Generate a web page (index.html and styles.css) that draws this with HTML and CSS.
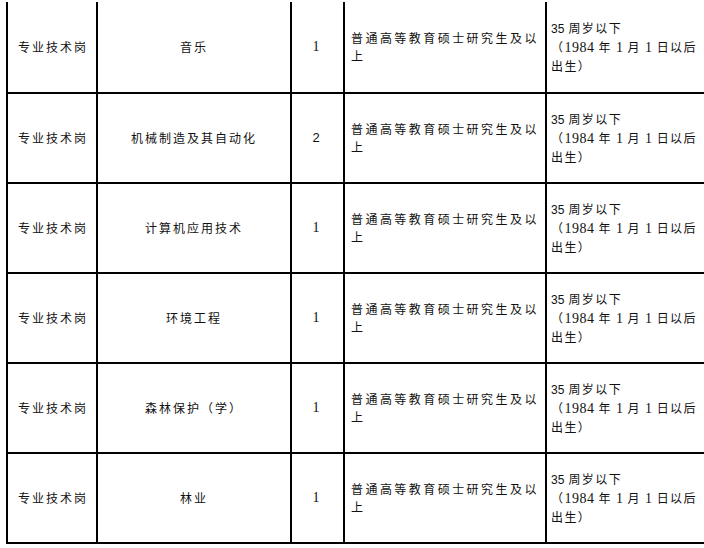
FILE: index.html
```html
<!DOCTYPE html>
<html lang="zh">
<head>
<meta charset="utf-8">
<link rel="stylesheet" href="styles.css">
</head>
<body>
<div class="sheet">
  <div class="cell c1">专业技术岗</div>
  <div class="cell c2">音乐</div>
  <div class="cell c3">1</div>
  <div class="cell c4"><span>普通高等教育硕士研究生及以上</span></div>
  <div class="cell c5"><span class="age"><span class="lat">35</span> 周岁以下<br>（<span class="num">1984</span> 年 <span class="num">1</span> 月 <span class="num">1</span> 日以后<br>出生）</span></div>

  <div class="cell c1">专业技术岗</div>
  <div class="cell c2">机械制造及其自动化</div>
  <div class="cell c3 lat">2</div>
  <div class="cell c4"><span>普通高等教育硕士研究生及以上</span></div>
  <div class="cell c5"><span class="age"><span class="lat">35</span> 周岁以下<br>（<span class="num">1984</span> 年 <span class="num">1</span> 月 <span class="num">1</span> 日以后<br>出生）</span></div>

  <div class="cell c1">专业技术岗</div>
  <div class="cell c2">计算机应用技术</div>
  <div class="cell c3">1</div>
  <div class="cell c4"><span>普通高等教育硕士研究生及以上</span></div>
  <div class="cell c5"><span class="age"><span class="lat">35</span> 周岁以下<br>（<span class="num">1984</span> 年 <span class="num">1</span> 月 <span class="num">1</span> 日以后<br>出生）</span></div>

  <div class="cell c1">专业技术岗</div>
  <div class="cell c2">环境工程</div>
  <div class="cell c3">1</div>
  <div class="cell c4"><span>普通高等教育硕士研究生及以上</span></div>
  <div class="cell c5"><span class="age"><span class="lat">35</span> 周岁以下<br>（<span class="num">1984</span> 年 <span class="num">1</span> 月 <span class="num">1</span> 日以后<br>出生）</span></div>

  <div class="cell c1">专业技术岗</div>
  <div class="cell c2">森林保护（学）</div>
  <div class="cell c3">1</div>
  <div class="cell c4"><span>普通高等教育硕士研究生及以上</span></div>
  <div class="cell c5"><span class="age"><span class="lat">35</span> 周岁以下<br>（<span class="num">1984</span> 年 <span class="num">1</span> 月 <span class="num">1</span> 日以后<br>出生）</span></div>

  <div class="cell c1">专业技术岗</div>
  <div class="cell c2">林业</div>
  <div class="cell c3">1</div>
  <div class="cell c4"><span>普通高等教育硕士研究生及以上</span></div>
  <div class="cell c5"><span class="age"><span class="lat">35</span> 周岁以下<br>（<span class="num">1984</span> 年 <span class="num">1</span> 月 <span class="num">1</span> 日以后<br>出生）</span></div>
</div>
</body>
</html>
```
FILE: styles.css
```css
html, body {
  margin: 0;
  padding: 0;
  background: #ffffff;
  overflow: hidden;
}
body {
  width: 704px;
  height: 548px;
}
.sheet {
  margin: 2px 0 0 6px;
  width: 711px;
  display: grid;
  grid-template-columns: 88px 192px 51px 200px 170px;
  grid-template-rows: 90px repeat(5, 88px);
  gap: 2px;
  padding: 0 0 2px 2px;
  background: #000000;
  font-family: "Noto Sans CJK SC", "Liberation Serif", serif;
  font-size: 12px;
  color: #111111;
}
.cell {
  background: #ffffff;
  display: flex;
  align-items: center;
  line-height: 18px;
  letter-spacing: 2px;
}
.c1, .c2, .c3 {
  justify-content: center;
}
.c1 {
  padding-left: 2px;
}
.c3 {
  font-family: "Liberation Serif", serif;
  font-size: 14px;
  letter-spacing: 0;
  padding-right: 3px;
}
.c3.lat {
  font-size: 13px;
}
.lat {
  font-family: "Liberation Sans", sans-serif;
  letter-spacing: 0;
}
.c4 {
  padding: 0 0 0 6px;
  letter-spacing: 2.45px;
}
.c5 {
  padding: 0 0 0 4px;
  letter-spacing: 1.4px;
}
.age {
  white-space: nowrap;
}
.num {
  font-family: "Liberation Serif", serif;
  font-size: 14px;
  line-height: 18px;
  letter-spacing: 0.5px;
}
```
